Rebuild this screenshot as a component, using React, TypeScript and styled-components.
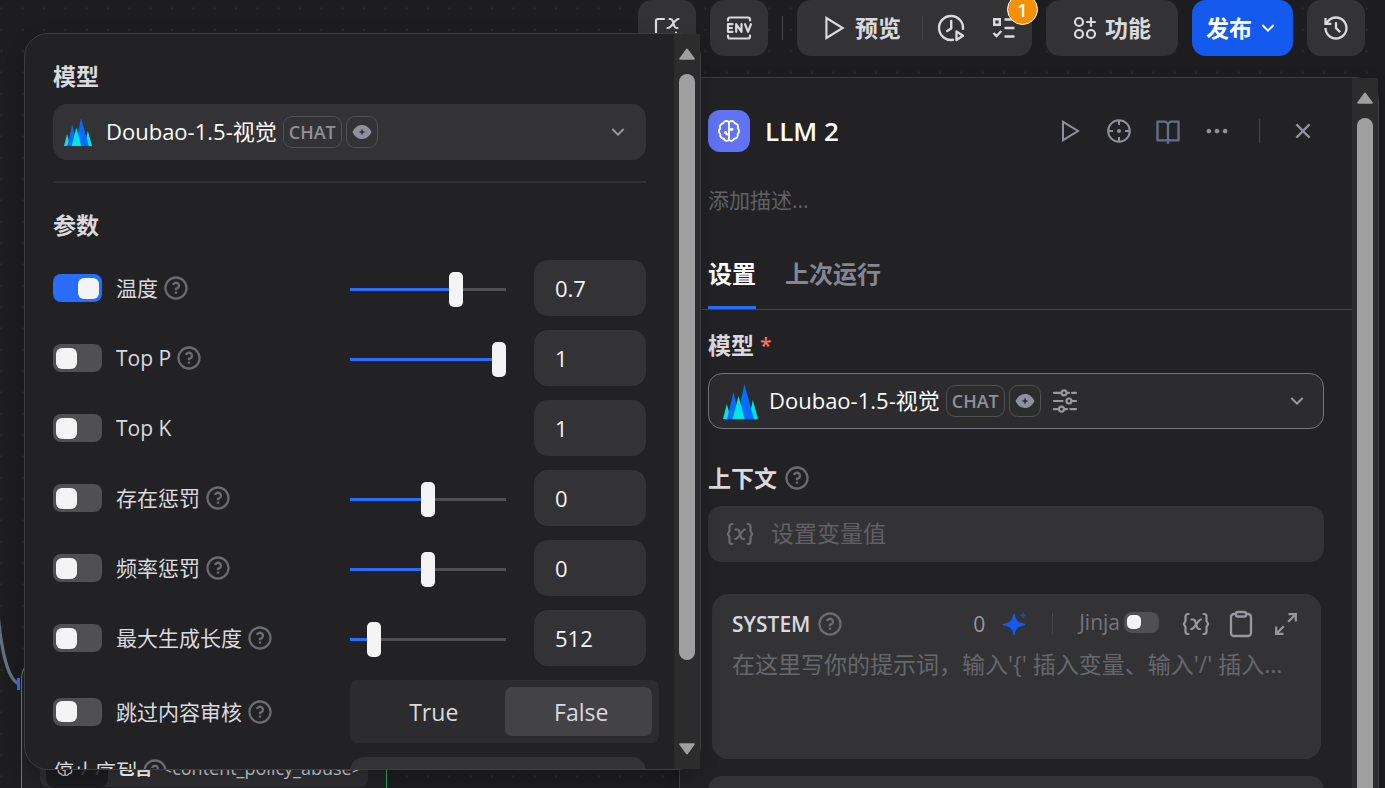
import React, { useState } from 'react';
import styled, { createGlobalStyle, css } from 'styled-components';
import {
  RiArrowDownSLine,
  RiBookOpenLine,
  RiCloseLine,
  RiHistoryLine,
  RiMoreFill,
  RiQuestionLine,
} from 'react-icons/ri';

const GlobalStyle = createGlobalStyle`
  *, *::before, *::after { box-sizing: border-box; }
  body {
    margin: 0;
    background: #1d1d20;
    color: #d9d9de;
    font-family: "Open Sans", "Noto Sans CJK SC", sans-serif;
    font-size: 21px;
    line-height: 28px;
  }
  button, input, textarea { font: inherit; color: inherit; }
  button { border: 0; padding: 0; background: none; cursor: pointer; }
  svg { display: block; flex: none; }
`;

/* ---------- icons ---------- */

const stroke = {
  fill: 'none',
  stroke: 'currentColor',
  strokeWidth: 2,
  strokeLinecap: 'round' as const,
  strokeLinejoin: 'round' as const,
};

const PlayIcon = ({ size = 24 }: { size?: number }) => (
  <svg width={size} height={size} viewBox="0 0 24 24" {...stroke} strokeLinejoin="miter">
    <path d="M5 2.800v18.400L20 12z" />
  </svg>
);

const BracketXIcon = () => (
  <svg width="28" height="28" viewBox="0 0 28 28" {...stroke} strokeWidth={2.2}>
    <path d="M11 5H5a2 2 0 0 0-2 2v16h5" />
    <path d="M16.500 5h1c1.500 0 1.800.8 2.200 2l1.600 5c.4 1.200.8 2 2.200 2h1M25.500 5c-4.500 0-6 9-11 9" />
    <path d="M23 18.500v4M19 22.500h6" />
  </svg>
);

const EnvIcon = () => (
  <svg width="28" height="28" viewBox="0 0 28 28" {...stroke} strokeWidth={2.2}>
    <path d="M3 6.500V5.500a2 2 0 0 1 2-2h18a2 2 0 0 1 2 2v1M3 21.500v1a2 2 0 0 0 2 2h18a2 2 0 0 0 2-2v-1" />
    <path d="M7.500 10.200H3v7.600h4.500M3 14h4M11.200 17.800v-7.600l5.300 7.600v-7.600M20 10.200l3 7.600 3-7.600" />
  </svg>
);

const ClockPlayIcon = () => (
  <svg width="28" height="28" viewBox="0 0 28 28" {...stroke} strokeWidth={2.4}>
    <path d="M16 25.800A12 12 0 1 1 26 14.800" />
    <path d="M14.200 7v7.500l-4 2.500" />
    <path d="M19.500 17.500v8.500l6.500-4.200z" />
  </svg>
);

const ChecklistIcon = () => (
  <svg width="26" height="26" viewBox="0 0 26 26" {...stroke} strokeWidth={2.400} strokeLinecap="butt" strokeLinejoin="miter">
    <path d="M3.200 4.200h5.600v5.600H3.200zM13.500 4.500h10M13.500 13h10M13.500 21.500h10M2.500 18l3 3 4.800-5" />
  </svg>
);

const FeaturesIcon = () => (
  <svg width="24" height="24" viewBox="0 0 24 24" {...stroke} strokeWidth={2.200}>
    <circle cx="6" cy="6" r="4" />
    <circle cx="6" cy="18" r="4" />
    <circle cx="18" cy="18" r="4" />
    <path d="M18 2v8M14 6h8" />
  </svg>
);

const BrainIcon = ({ size = 24 }: { size?: number }) => (
  <svg width={size} height={size} viewBox="0 0 24 24" {...stroke} strokeWidth={1.900}>
    <path d="M12 3.200C10.500 1.200 7 1.600 6.300 4.200 3.600 4.400 2.300 7.200 3.300 9.300 1.400 11 1.600 13.700 3.300 14.900 2.700 17.600 4.500 19.700 7 19.800 8 22.300 10.800 22.400 12 20.800 13.200 22.400 16 22.300 17 19.800 19.500 19.700 21.300 17.600 20.700 14.900 22.400 13.700 22.600 11 20.700 9.300 21.700 7.200 20.400 4.400 17.700 4.200 17 1.600 13.500 1.200 12 3.200z" />
    <path d="M12 3.200v17.600M12 10.500h3M12 15.500h-1a2 2 0 0 1-2-2" />
    <circle cx="15" cy="10.200" r=".6" />
    <circle cx="8.600" cy="13.600" r=".6" />
  </svg>
);

const LocateIcon = () => (
  <svg width="26" height="26" viewBox="0 0 26 26" {...stroke} strokeLinecap="butt">
    <circle cx="13" cy="13" r="10.800" />
    <path d="M13 2v5M13 19v5M2 13h5M19 13h5" />
    <circle cx="13" cy="13" r="2" fill="currentColor" stroke="none" />
  </svg>
);

const EyeIcon = () => (
  <svg width="20" height="16" viewBox="0 0 20 16" fill="currentColor">
    <path
      fillRule="evenodd"
      d="M10 1c4.300 0 7.500 2.700 9.500 7-2 4.300-5.200 7-9.500 7S2.500 12.300.5 8C2.500 3.700 5.700 1 10 1zm0 3.600L9 7 6.600 8 9 9l1 2.400L11 9l2.400-1L11 7z"
    />
  </svg>
);

const TuneIcon = () => (
  <svg width="26" height="26" viewBox="0 0 26 26" {...stroke} strokeWidth={2.200}>
    <path d="M2 4.800h7M15 4.800h2M20 4.800h4M2 13h8.500M19.500 13H24M2 21.200h4.500M13 21.200h2M18.500 21.200H24" />
    <circle cx="12" cy="4.800" r="2.500" />
    <circle cx="17" cy="13" r="2.500" />
    <circle cx="9.500" cy="21.200" r="2.500" />
  </svg>
);

const VariableIcon = () => (
  <svg width="28" height="24" viewBox="0 0 28 24" {...stroke} strokeWidth={2.200}>
    <path d="M6.500 2H6a2.500 2.500 0 0 0-2.500 2.500V9L1.800 12l1.700 3v4.500A2.500 2.500 0 0 0 6 22h.5M21.500 2h.5a2.500 2.500 0 0 1 2.500 2.500V9l1.700 3-1.700 3v4.500A2.500 2.500 0 0 1 22 22h-.5" />
    <path d="M9.500 7.500h1.800c1.200 0 1.500.6 1.900 1.700l1.800 6c.4 1.200.8 1.800 2 1.800h1M19 7.500c-3.500 0-5.500 9.500-9.800 9.500" />
  </svg>
);

const ClipboardIcon = () => (
  <svg width="26" height="28" viewBox="0 0 26 28" {...stroke} strokeWidth={2.300}>
    <path d="M7.500 4H6a3 3 0 0 0-3 3v16a3 3 0 0 0 3 3h14a3 3 0 0 0 3-3V7a3 3 0 0 0-3-3h-1.500" />
    <rect x="8" y="2" width="10" height="4.500" rx="1.500" />
  </svg>
);

const ExpandIcon = () => (
  <svg width="26" height="26" viewBox="0 0 26 26" {...stroke} strokeWidth={2.200} strokeLinecap="butt" strokeLinejoin="miter">
    <path d="M15.500 3.200h7.300v7.300M22.500 3.500l-7.300 7.300M10.500 22.800H3.200v-7.300M3.500 22.500l7.300-7.300" />
  </svg>
);

const SparkleIcon = () => (
  <svg width="26" height="26" viewBox="0 0 26 26" fill="#155aef">
    <path d="M12 3.500c1.200 6.500 3.200 8.700 10.500 10-7.300 1.300-9.300 3.500-10.500 10-1.200-6.500-3.200-8.700-10.500-10 7.300-1.300 9.300-3.500 10.500-10z" stroke="#155aef" strokeWidth="1.500" strokeLinejoin="round" />
    <path opacity=".6" d="M21 .500c.4 2.500 1.200 3.300 3.500 3.800-2.300.5-3.100 1.300-3.500 3.800-.4-2.500-1.200-3.300-3.500-3.800 2.300-.5 3.100-1.300 3.500-3.800z" />
  </svg>
);

const DoubaoLogo = ({ size }: { size: number }) => (
  <svg width={size} height={size} viewBox="0 0 35 35">
    <path fill="#00e5e5" d="M0 35 3.800 20 8 35zM26 35l3.800-19L35 35z" />
    <path fill="#006eff" d="M4 35 10.500 8l6 27zM14 35 21.300 0 31 35z" />
    <path fill="#00e5e5" d="M9.500 35l6-23 6 23z" />
  </svg>
);

const ArrowGlyph = styled.svg<{ $down?: boolean }>`
  ${p => p.$down && css`transform: rotate(180deg);`}
`;

/* ---------- shell ---------- */

const Page = styled.div`
  position: relative;
  display: flex;
  flex-direction: column;
  height: 100vh;
  overflow: hidden;
`;

const Canvas = styled.div`
  position: absolute;
  inset: 0;
`;

const Drawing = styled.svg`
  position: absolute;
  inset: 0;
  width: 100%;
  height: 100%;
`;

const CanvasNode = styled.div`
  position: absolute;
  left: 21px;
  top: 655px;
  width: 366px;
  height: 300px;
  padding: 93px 18px 0;
  border: 1px solid #2f9e68;
  border-radius: 24px;
  background: #222225;
`;

const Condition = styled.div`
  display: flex;
  align-items: center;
  height: 38px;
  padding: 0 6px;
  gap: 9px;
  border-radius: 8px;
  background: #2f2f32;
  color: #c8c8cd;
  font-size: 18px;
  white-space: nowrap;
`;

const ConditionVar = styled.span`
  display: flex;
  align-items: center;
  gap: 8px;
  width: 68px;
  height: 38px;
  padding-left: 10px;
  border-radius: 8px;
  background: #1d1d20;
  color: #c8c8cd;

  i { color: #47474d; }
`;

const Operator = styled.strong`
  color: #fff;
  font-size: 18px;
`;

const Toolbar = styled.header`
  position: relative;
  display: flex;
  justify-content: flex-end;
  align-items: center;
  gap: 14px;
  height: 56px;
  padding-right: 20px;
`;

const ToolButton = styled.button<{ $primary?: boolean; $wide?: boolean }>`
  display: flex;
  align-items: center;
  justify-content: center;
  gap: ${p => (p.$primary ? '4px' : '8px')};
  height: 56px;
  width: ${p => (p.$wide ? 'auto' : '58px')};
  padding: ${p => (p.$primary ? '0 13px 0 14px' : p.$wide ? '0 27px' : '0')};
  border-radius: 14px;
  background: ${p => (p.$primary ? '#155aef' : '#333335')};
  color: ${p => (p.$primary ? '#fff' : '#d9d9de')};
  font-size: 23px;
  font-weight: 600;
`;

const RunGroup = styled.div`
  position: relative;
  display: flex;
  align-items: center;
  width: 235px;
  height: 56px;
  padding: 0 15px 0 24px;
  border-radius: 14px;
  background: #333335;
`;

const RunButton = styled.button`
  display: flex;
  align-items: center;
  gap: 8px;
  font-size: 23px;
  font-weight: 600;
`;

const Rule = styled.span<{ $tall?: boolean }>`
  flex: none;
  width: 1px;
  height: ${p => (p.$tall ? '24px' : '21px')};
  background: #47474d;
`;

const RunRule = styled(Rule)`
  margin: 0 14px 0 21px;
`;

const RunGap = styled.span`
  flex: 1;
`;

const CountBadge = styled.span`
  position: absolute;
  top: -6px;
  right: -6px;
  display: grid;
  place-items: center;
  width: 31px;
  height: 31px;
  border: 1px solid #fff;
  border-radius: 50%;
  background: #f79009;
  color: #fff;
  font-size: 18px;
  line-height: 24px;
  font-weight: 600;
`;

const surface = css`
  display: flex;
  border: 1px solid #3e3e42;
  border-radius: 24px;
  background: #222225;
  box-shadow: 0 8px 20px rgba(0, 0, 0, 0.2);
`;

const SidePanel = styled.aside`
  ${surface}
  position: relative;
  flex: 1;
  align-self: flex-end;
  width: 700px;
  max-width: 100%;
  min-height: 0;
  margin: 21px 6px 0 0;
  border-bottom: 0;
  border-bottom-left-radius: 0;
  border-bottom-right-radius: 0;
`;

const Popover = styled.section`
  ${surface}
  position: absolute;
  z-index: 2;
  top: 33px;
  bottom: 18px;
  left: 24px;
  right: 684px;
`;

const ScrollColumn = styled.div<{ $ends?: boolean }>`
  flex: none;
  display: flex;
  flex-direction: column;
  align-items: center;
  width: 26px;
  padding: ${p => (p.$ends ? '14px 0' : '14px 0 0')};
  gap: 14px;
  background: #2c2c2c;
`;

const ScrollThumb = styled.div<{ $open?: boolean }>`
  flex: 1;
  width: 16px;
  border-radius: ${p => (p.$open ? '8px 8px 0 0' : '8px')};
  background: #9f9f9f;
`;

const ScrollSpacer = styled.div`
  height: 55px;
`;

const ScrollArrow = ({ down }: { down?: boolean }) => (
  <ArrowGlyph $down={down} width="16" height="12" viewBox="0 0 16 12">
    <path d="M8 1.500 14.800 10.800H1.200z" fill="#9f9f9f" stroke="#9f9f9f" strokeWidth="2" strokeLinejoin="round" />
  </ArrowGlyph>
);

const ScrollBar = ({ ends }: { ends?: boolean }) => (
  <ScrollColumn $ends={ends} aria-hidden="true">
    <ScrollArrow />
    <ScrollThumb $open={!ends} />
    {ends && <ScrollSpacer />}
    {ends && <ScrollArrow down />}
  </ScrollColumn>
);

/* ---------- shared controls ---------- */

const Heading = styled.h2`
  display: flex;
  align-items: center;
  gap: 6px;
  margin: 0;
  font-size: 23px;
  font-weight: 600;
  line-height: 28px;
`;

const Required = styled.span`
  color: #f97066;
  font-size: 21px;
`;

const ModelButton = styled.button<{ $outlined?: boolean }>`
  display: flex;
  align-items: center;
  width: 100%;
  height: 56px;
  padding: ${p => (p.$outlined ? '0 14px' : '0 16px 0 11px')};
  border: ${p => (p.$outlined ? '1px solid #747481' : '0')};
  border-radius: 14px;
  background: ${p => (p.$outlined ? '#2c2c2e' : '#333335')};
  color: #fbfbfc;
`;

const ModelName = styled.span<{ $inset?: boolean }>`
  margin: ${p => (p.$inset ? '0 6px 0 14px' : '0 6px 0 11px')};
  padding-bottom: 2px;
  font-size: 22px;
`;

const Tag = styled.span`
  display: flex;
  align-items: center;
  justify-content: center;
  height: 32px;
  margin-right: 4px;
  padding: 0 5px;
  border: 1px solid #505055;
  border-radius: 9px;
  color: #8e919b;
  font-size: 18px;
  font-weight: 600;
`;

const Grow = styled.span`
  flex: 1;
`;

const MutedIcon = styled.span`
  display: flex;
  margin-left: 7px;
  color: #98989f;
`;

const Help = styled.span`
  display: flex;
  color: #6a6b73;
`;

const Switch = styled.input.attrs({ type: 'checkbox', role: 'switch' })<{ $small?: boolean }>`
  appearance: none;
  flex: none;
  display: flex;
  align-items: center;
  width: ${p => (p.$small ? '35px' : '49px')};
  height: ${p => (p.$small ? '21px' : '28px')};
  margin: 0;
  padding: 3px;
  border-radius: 8px;
  background: #505052;
  cursor: pointer;

  &::before {
    content: '';
    width: ${p => (p.$small ? '14px' : '21px')};
    height: ${p => (p.$small ? '14px' : '21px')};
    border-radius: ${p => (p.$small ? '5px' : '6px')};
    background: #f4f4f5;
  }
  &:checked { justify-content: flex-end; background: #296dff; }
`;

const HelpMark = () => (
  <Help><RiQuestionLine size={28} /></Help>
);

const ModelSelect = ({ outlined }: { outlined?: boolean }) => (
  <ModelButton type="button" aria-haspopup="listbox" $outlined={outlined}>
    <DoubaoLogo size={outlined ? 35 : 28} />
    <ModelName $inset={!outlined}>Doubao-1.5-视觉</ModelName>
    <Tag>CHAT</Tag>
    <Tag><EyeIcon /></Tag>
    {outlined && <MutedIcon><TuneIcon /></MutedIcon>}
    <Grow />
    <MutedIcon><RiArrowDownSLine size={24} /></MutedIcon>
  </ModelButton>
);

/* ---------- model popover ---------- */

const PopoverBody = styled.div`
  flex: 1;
  min-width: 0;
  overflow: hidden;
  padding: 28px 28px 0;
`;

const Divider = styled.hr`
  height: 2px;
  margin: 21px 0 28px;
  border: 0;
  background: #303033;
`;

const ModelField = styled.div`
  margin-top: 14px;
`;

const Params = styled.div`
  display: flex;
  flex-direction: column;
  gap: 14px;
  margin-top: 21px;
`;

const ParamRow = styled.div<{ $top?: boolean }>`
  display: flex;
  align-items: ${p => (p.$top ? 'flex-start' : 'center')};
`;

const ParamName = styled.div`
  flex: 1;
  display: flex;
  align-items: center;
  white-space: nowrap;
`;

const ParamLabel = styled.label<{ $flush?: boolean }>`
  margin-left: ${p => (p.$flush ? '0' : '14px')};
  margin-right: 4px;
`;

const Slider = styled.input.attrs({ type: 'range' })`
  appearance: none;
  flex: none;
  width: 156px;
  height: 35px;
  margin: 2px 28px 0 0;
  background: linear-gradient(to right, #296dff var(--filled), #505052 var(--filled)) center / 100% 3px no-repeat;

  &::-webkit-slider-thumb {
    appearance: none;
    width: 14px;
    height: 35px;
    border-radius: 5px;
    background: #f4f4f5;
  }
`;

const NumberBox = styled.input`
  width: 112px;
  height: 56px;
  padding: 0 21px;
  border: 0;
  border-radius: 14px;
  background: #333335;
  color: #f4f4f5;
  font-size: 22px;
`;

const Segments = styled.div`
  flex: none;
  display: flex;
  width: 309px;
  height: 63px;
  margin-right: -13px;
  padding: 7px;
  border-radius: 7px;
  background: #2c2c2e;
`;

const Segment = styled.label<{ $on: boolean }>`
  flex: 1 1 0;
  min-width: 0;
  display: flex;
  align-items: center;
  justify-content: center;
  border-radius: 7px;
  background: ${p => (p.$on ? '#434347' : 'transparent')};
  font-size: 23px;
  padding-left: 6px;

  input { appearance: none; width: 0; height: 0; margin: 0; }
`;

const StopBox = styled.input`
  width: 296px;
  height: 56px;
  padding: 0 21px;
  border: 0;
  border-radius: 14px;
  background: #333335;
`;

interface Param {
  id: string;
  label: string;
  on?: boolean;
  help?: boolean;
  value: string;
  fill?: number;
}

const params: Param[] = [
  { id: 'temperature', label: '温度', on: true, help: true, value: '0.7', fill: 70 },
  { id: 'top-p', label: 'Top P', help: true, value: '1', fill: 100 },
  { id: 'top-k', label: 'Top K', value: '1' },
  { id: 'presence', label: '存在惩罚', help: true, value: '0', fill: 50 },
  { id: 'frequency', label: '频率惩罚', help: true, value: '0', fill: 50 },
  { id: 'max-tokens', label: '最大生成长度', help: true, value: '512', fill: 12 },
];

const ParamLine = ({ param }: { param: Param }) => {
  const [fill, setFill] = useState(param.fill ?? 0);
  return (
    <ParamRow>
      <ParamName>
        <Switch id={param.id} defaultChecked={param.on} />
        <ParamLabel htmlFor={param.id}>{param.label}</ParamLabel>
        {param.help && <HelpMark />}
      </ParamName>
      {param.fill !== undefined && (
        <Slider
          aria-label={param.label}
          value={fill}
          onChange={e => setFill(Number(e.target.value))}
          style={{ '--filled': `${fill}%` } as React.CSSProperties}
        />
      )}
      <NumberBox aria-label={param.label} defaultValue={param.value} />
    </ParamRow>
  );
};

const ModelPopover = () => {
  const [skip, setSkip] = useState('False');
  return (
    <Popover>
      <PopoverBody>
        <Heading>模型</Heading>
        <ModelField><ModelSelect /></ModelField>
        <Divider />
        <Heading>参数</Heading>
        <Params>
          {params.map(p => <ParamLine key={p.id} param={p} />)}
          <ParamRow>
            <ParamName>
              <Switch id="skip" />
              <ParamLabel htmlFor="skip">跳过内容审核</ParamLabel>
              <HelpMark />
            </ParamName>
            <Segments role="radiogroup" aria-label="跳过内容审核">
              {['True', 'False'].map(v => (
                <Segment key={v} $on={skip === v}>
                  <input type="radio" name="skip-value" checked={skip === v} onChange={() => setSkip(v)} />
                  {v}
                </Segment>
              ))}
            </Segments>
          </ParamRow>
          <ParamRow $top>
            <ParamName>
              <ParamLabel htmlFor="stop" $flush>停止序列</ParamLabel>
              <HelpMark />
            </ParamName>
            <StopBox id="stop" />
          </ParamRow>
        </Params>
      </PopoverBody>
      <ScrollBar ends />
    </Popover>
  );
};

/* ---------- node side panel ---------- */

const PanelBody = styled.div`
  flex: 1;
  min-width: 0;
  overflow: hidden;
`;

const PanelHead = styled.div`
  display: flex;
  align-items: center;
  padding: 32px 32px 0 28px;
`;

const NodeBadge = styled.span`
  display: grid;
  place-items: center;
  width: 42px;
  height: 42px;
  margin-right: 15px;
  border-radius: 12px;
  background: #6172f3;
  color: #fff;
`;

const NodeTitle = styled.h1`
  flex: 1;
  margin: 0;
  color: #fbfbfc;
  font-size: 26px;
  font-weight: 600;
`;

const Actions = styled.div`
  display: flex;
  align-items: center;
  gap: 14px;
`;

const IconButton = styled.button<{ $slate?: boolean }>`
  display: grid;
  place-items: center;
  width: 35px;
  height: 35px;
  color: ${p => (p.$slate ? '#64708a' : '#8e919b')};
`;

const ActionRule = styled(Rule)`
  margin: 0 11px;
`;

const Description = styled.input`
  display: block;
  width: calc(100% - 56px);
  height: 42px;
  margin: 27px 28px 0;
  padding: 0;
  border: 0;
  background: none;
  &::placeholder { color: #606066; }
`;

const Tabs = styled.div`
  display: flex;
  gap: 29px;
  height: 89px;
  padding: 0 28px;
  border-bottom: 1px solid #46464a;
`;

const Tab = styled.button<{ $active?: boolean }>`
  padding-top: 21px;
  border-bottom: 3px solid ${p => (p.$active ? '#296dff' : 'transparent')};
  color: ${p => (p.$active ? '#fbfbfc' : '#85868f')};
  font-size: 24px;
  font-weight: 600;
`;

const Settings = styled.div`
  display: flex;
  flex-direction: column;
  padding: 21px 28px 0;
`;

const Field = styled.div`
  display: flex;
  flex-direction: column;
  gap: 14px;
  margin-bottom: 35px;
`;

const ContextBox = styled.label`
  display: flex;
  align-items: center;
  gap: 17px;
  height: 56px;
  padding: 0 18px;
  border-radius: 14px;
  background: #333335;
  color: #6a6b73;
`;

const ContextInput = styled.input`
  flex: 1;
  min-width: 0;
  padding: 0 0 2px;
  border: 0;
  background: none;
  font-size: 23px;
  &::placeholder { color: #606066; }
`;

const PromptCard = styled.div`
  height: 165px;
  margin: -3px 3px 17px 4px;
  padding: 12px 18px 0 20px;
  border-radius: 16px;
  background: #333335;
`;

const PromptHead = styled.div`
  display: flex;
  align-items: center;
  height: 35px;
`;

const PromptTitle = styled.label`
  flex: 1;
  display: flex;
  align-items: center;
  gap: 6px;
  font-weight: 600;
`;

const PromptTools = styled.div`
  display: flex;
  align-items: center;
  gap: 10px;
  color: #98989f;
`;

const Count = styled.span`
  padding-right: 2px;
`;

const Jinja = styled.label`
  display: flex;
  align-items: center;
  gap: 4px;
  margin: 0 9px 0 16px;
  padding-bottom: 3px;
  color: #74757d;
`;

const ToolRule = styled(Rule)`
  margin-left: 10px;
`;

const SmallButton = styled.button`
  display: grid;
  place-items: center;
  width: 35px;
  height: 35px;
`;

const PromptText = styled.textarea`
  display: block;
  width: 100%;
  height: 98px;
  margin-top: 9px;
  padding: 0;
  border: 0;
  background: none;
  resize: none;
  font-size: 23px;
  line-height: 28px;
  white-space: nowrap;
  overflow: hidden;
  &::placeholder { color: #66676d; }
`;

const NextCard = styled.div`
  height: 56px;
  border-radius: 14px;
  background: #333335;
`;

const NodePanel = () => (
  <SidePanel>
    <PanelBody>
      <PanelHead>
        <NodeBadge><BrainIcon /></NodeBadge>
        <NodeTitle>LLM 2</NodeTitle>
        <Actions>
          <IconButton aria-label="运行"><PlayIcon /></IconButton>
          <IconButton aria-label="定位"><LocateIcon /></IconButton>
          <IconButton aria-label="文档" $slate><RiBookOpenLine size={28} /></IconButton>
          <IconButton aria-label="更多"><RiMoreFill size={28} /></IconButton>
          <ActionRule $tall />
          <IconButton aria-label="关闭"><RiCloseLine size={28} /></IconButton>
        </Actions>
      </PanelHead>
      <Description aria-label="描述" placeholder="添加描述..." />
      <Tabs role="tablist">
        <Tab role="tab" aria-selected="true" $active>设置</Tab>
        <Tab role="tab" aria-selected="false">上次运行</Tab>
      </Tabs>
      <Settings>
        <Field>
          <Heading>模型 <Required>*</Required></Heading>
          <ModelSelect outlined />
        </Field>
        <Field>
          <Heading>上下文 <HelpMark /></Heading>
          <ContextBox>
            <VariableIcon />
            <ContextInput aria-label="上下文" placeholder="设置变量值" />
          </ContextBox>
        </Field>
        <PromptCard>
          <PromptHead>
            <PromptTitle htmlFor="system-prompt">SYSTEM <HelpMark /></PromptTitle>
            <PromptTools>
              <Count>0</Count>
              <SmallButton aria-label="生成提示词"><SparkleIcon /></SmallButton>
              <ToolRule />
              <Jinja>Jinja <Switch $small /></Jinja>
              <SmallButton aria-label="插入变量"><VariableIcon /></SmallButton>
              <SmallButton aria-label="复制"><ClipboardIcon /></SmallButton>
              <SmallButton aria-label="展开"><ExpandIcon /></SmallButton>
            </PromptTools>
          </PromptHead>
          <PromptText id="system-prompt" placeholder="在这里写你的提示词，输入'{' 插入变量、输入'/' 插入..." />
        </PromptCard>
        <NextCard />
      </Settings>
    </PanelBody>
    <ScrollBar />
  </SidePanel>
);

/* ---------- page ---------- */

const App = () => (
  <Page>
    <GlobalStyle />
    <Canvas>
      <Drawing>
        <defs>
          <pattern id="dots" x="-9.200" y="-2" width="21.333" height="21.333" patternUnits="userSpaceOnUse">
            <circle cx="10.667" cy="10.667" r="1.300" fill="#2b2b30" />
          </pattern>
        </defs>
        <rect width="100%" height="100%" fill="url(#dots)" />
        <path d="M-2 612C1 650 8 680 19 684" fill="none" stroke="#676f83" strokeWidth="3" />
        <rect x="17" y="678" width="3" height="12" fill="#296dff" />
      </Drawing>
      <CanvasNode>
        <Condition>
          <ConditionVar><BrainIcon size={18} /><i>/</i><i>/</i></ConditionVar>
          <Operator>包含</Operator>
          <span>&lt;content_policy_abuse&gt;</span>
        </Condition>
      </CanvasNode>
    </Canvas>
    <Toolbar>
      <ToolButton aria-label="会话变量"><BracketXIcon /></ToolButton>
      <ToolButton aria-label="环境变量"><EnvIcon /></ToolButton>
      <Rule $tall />
      <RunGroup>
        <RunButton><PlayIcon size={26} />预览</RunButton>
        <RunRule $tall />
        <RunButton aria-label="运行历史"><ClockPlayIcon /></RunButton>
        <RunGap />
        <RunButton aria-label="检查清单"><ChecklistIcon /></RunButton>
        <CountBadge>1</CountBadge>
      </RunGroup>
      <ToolButton $wide><FeaturesIcon />功能</ToolButton>
      <ToolButton $wide $primary>发布<RiArrowDownSLine size={24} /></ToolButton>
      <ToolButton aria-label="版本历史"><RiHistoryLine size={28} /></ToolButton>
    </Toolbar>
    <NodePanel />
    <ModelPopover />
  </Page>
);

export default App;
